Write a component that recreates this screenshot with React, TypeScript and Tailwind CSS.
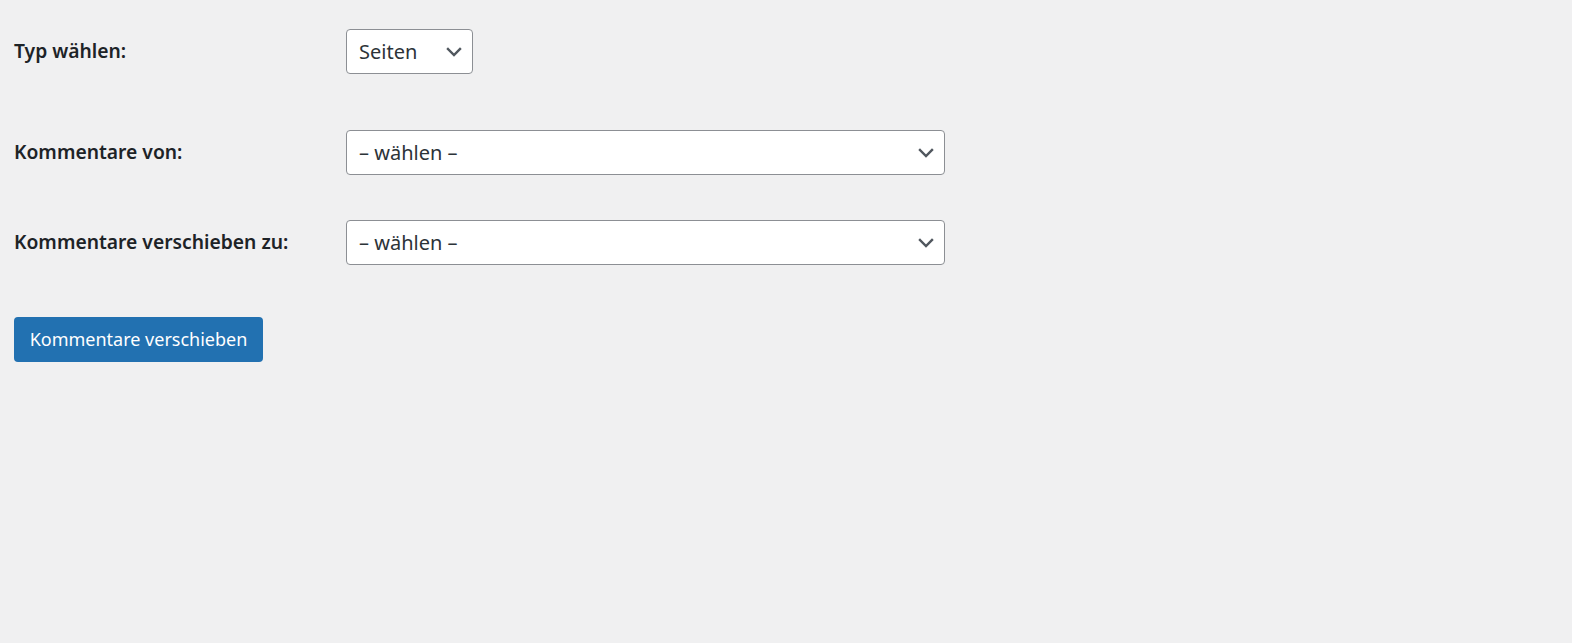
import React from "react";

const Chevron = () => (
  <svg width="16" height="10" viewBox="0 0 16 10" fill="none" className="shrink-0">
    <path d="M2 2l6 6 6-6" stroke="#50575e" strokeWidth="2.4" strokeLinecap="square" />
  </svg>
);

const Select = ({ text, wide }: { text: string; wide?: boolean }) => (
  <div
    className={`flex items-center justify-between h-[45px] bg-white border border-[#8c8f94] rounded-[4px] pl-[12px] pr-[10px] text-[#2c3338] text-[20px] ${
      wide ? "w-[599px]" : "w-[127px]"
    }`}
  >
    <span className="leading-none">{text}</span>
    <Chevron />
  </div>
);

export default function App() {
  return (
    <div
      className="min-h-[643px] w-full bg-[#f0f0f1] pl-[14px] pt-[29px]"
      style={{ fontFamily: '"Noto Sans", "Open Sans", sans-serif' }}
    >
      <div className="flex items-center">
        <div className="w-[332px] shrink-0 font-semibold text-[19.3px] text-[#1d2327]">Typ wählen:</div>
        <Select text="Seiten" />
      </div>
      <div className="flex items-center mt-[56px]">
        <div className="w-[332px] shrink-0 font-semibold text-[19.3px] text-[#1d2327]">Kommentare von:</div>
        <Select text="– wählen –" wide />
      </div>
      <div className="flex items-center mt-[45px]">
        <div className="w-[332px] shrink-0 font-semibold text-[19.3px] text-[#1d2327]">Kommentare verschieben zu:</div>
        <Select text="– wählen –" wide />
      </div>
      <button className="mt-[52px] h-[45px] w-[249px] bg-[#2271b1] text-white text-[18px] rounded-[4px] flex items-center justify-center">
        Kommentare verschieben
      </button>
    </div>
  );
}
